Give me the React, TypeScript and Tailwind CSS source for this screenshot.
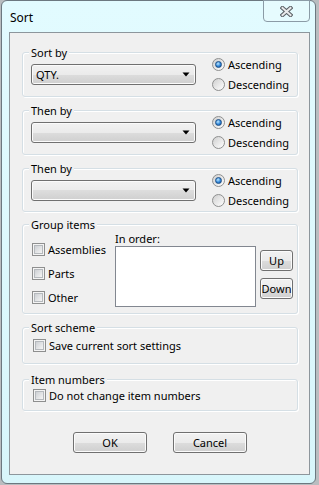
import React from "react";

const Radio = ({ checked }: { checked?: boolean }) => (
  <span className="flex w-[13px] h-[13px] shrink-0 items-center justify-center rounded-full border border-[#8e8f8f] bg-[linear-gradient(135deg,#cfcfcf,#ffffff)]">
    {checked && (
      <span className="w-[7px] h-[7px] rounded-full border border-[#1d4f86] bg-[radial-gradient(circle_at_40%_35%,#bfe9ff,#2f86da_55%,#1a4d8c)]" />
    )}
  </span>
);

const Check = () => (
  <span className="flex w-[13px] h-[13px] shrink-0 border border-[#8e8f8f] bg-[#f4f4f4] p-[1px]">
    <span className="flex-1 border border-[#b5b9bd] bg-[linear-gradient(135deg,#cdd0d4,#f5f5f5)]" />
  </span>
);

const RadioRow = ({ checked, label }: { checked?: boolean; label: string }) => (
  <div className="flex h-[20px] items-center gap-[3px]">
    <Radio checked={checked} />
    <span className="leading-[15px]">{label}</span>
  </div>
);

const CheckRow = ({ label }: { label: string }) => (
  <div className="flex h-[15px] items-center gap-[3px]">
    <Check />
    <span className="leading-[15px]">{label}</span>
  </div>
);

const btn =
  "flex items-center justify-center border border-[#707070] rounded-[3px] bg-[linear-gradient(#f2f2f2,#ebebeb_50%,#dddddd_50%,#cfcfcf)] shadow-[inset_0_0_0_1px_#fbfbfb] leading-[15px]";

const Combo = ({ value }: { value?: string }) => (
  <div className={"w-[165px] h-[21px] justify-between! pl-[4px] pr-[5px] " + btn}>
    <span>{value ?? ""}</span>
    <svg width="8" height="5" viewBox="0 0 8 5">
      <path d="M0.5 0.5h7l-3.5 4z" fill="#000" />
    </svg>
  </div>
);

const Group = ({
  label,
  className,
  children,
}: {
  label: string;
  className: string;
  children?: React.ReactNode;
}) => (
  <div
    className={
      "relative rounded-[3px] border border-[#d5dfe5] shadow-[inset_1px_1px_0_#ffffff,1px_1px_0_#ffffff] " +
      className
    }
  >
    <span className="absolute -top-[8px] left-[6px] bg-[#f0f0f0] px-[2px] leading-[15px]">
      {label}
    </span>
    {children}
  </div>
);

const SortGroup = ({ label, value, className }: { label: string; value?: string; className: string }) => (
  <Group label={label} className={"flex items-center pl-[8px] " + className}>
    <Combo value={value} />
    <div className="ml-[16px] flex flex-col">
      <RadioRow checked label="Ascending" />
      <RadioRow label="Descending" />
    </div>
  </Group>
);

export default function App() {
  return (
    <div className="w-[319px] h-[485px] overflow-hidden bg-[#b9bdc0] pl-[1px] font-['Noto_Sans',sans-serif] text-[11px] text-black">
      <div className="flex w-[315px] h-[484px] flex-col rounded-[6px] border border-[#6c7880] bg-[linear-gradient(#e2fbff,#d8f6fb)] pl-[7px] pr-[5px] pb-[8px]">
        <div className="flex h-[31px] items-start justify-between">
          <span className="mt-[9px] pl-[1px] leading-[15px] text-[12px]">Sort</span>
          <div className="-mt-[1px] flex w-[47px] h-[22px] items-center justify-center rounded-b-[4px] border border-[#8b9ba6] bg-[#e6fbfe] pt-[1px]">
            <svg width="13" height="11" viewBox="0 0 13 11">
              <path d="M2.5 2l8 7M10.5 2l-8 7" stroke="#5c6166" strokeWidth="4.2" strokeLinecap="square" />
              <path d="M2.5 2l8 7M10.5 2l-8 7" stroke="#e9eaeb" strokeWidth="2" strokeLinecap="square" />
            </svg>
          </div>
        </div>
        <div className="flex h-[443px] flex-col border border-[#8d969c] bg-[#f0f0f0] pl-[12px] pr-[11px]">
          <SortGroup label="Sort by" value="QTY." className="mt-[19px] h-[45px]" />
          <SortGroup label="Then by" className="mt-[13px] h-[45px]" />
          <SortGroup label="Then by" className="mt-[13px] h-[44px]" />
          <Group label="Group items" className="mt-[12px] h-[90px] flex">
            <div className="flex w-[92px] flex-col gap-[9px] pl-[9px] pt-[17px]">
              <CheckRow label="Assemblies" />
              <CheckRow label="Parts" />
              <CheckRow label="Other" />
            </div>
            <div className="flex flex-col pt-[6px]">
              <span className="leading-[15px]">In order:</span>
              <div className="w-[141px] h-[61px] border border-[#828790] bg-white" />
            </div>
            <div className="ml-[4px] flex flex-col gap-[7px] pt-[25px]">
              <div className={"w-[33px] h-[21px] " + btn}>Up</div>
              <div className={"w-[33px] h-[21px] " + btn}>Down</div>
            </div>
          </Group>
          <Group label="Sort scheme" className="mt-[13px] h-[37px] flex items-center pl-[10px]">
            <CheckRow label="Save current sort settings" />
          </Group>
          <Group label="Item numbers" className="mt-[15px] h-[32px] flex items-center pl-[10px]">
            <CheckRow label="Do not change item numbers" />
          </Group>
          <div className="mt-[21px] flex justify-center gap-[26px]">
            <div className={"w-[74px] h-[21px] " + btn}>OK</div>
            <div className={"w-[74px] h-[21px] " + btn}>Cancel</div>
          </div>
        </div>
      </div>
    </div>
  );
}
